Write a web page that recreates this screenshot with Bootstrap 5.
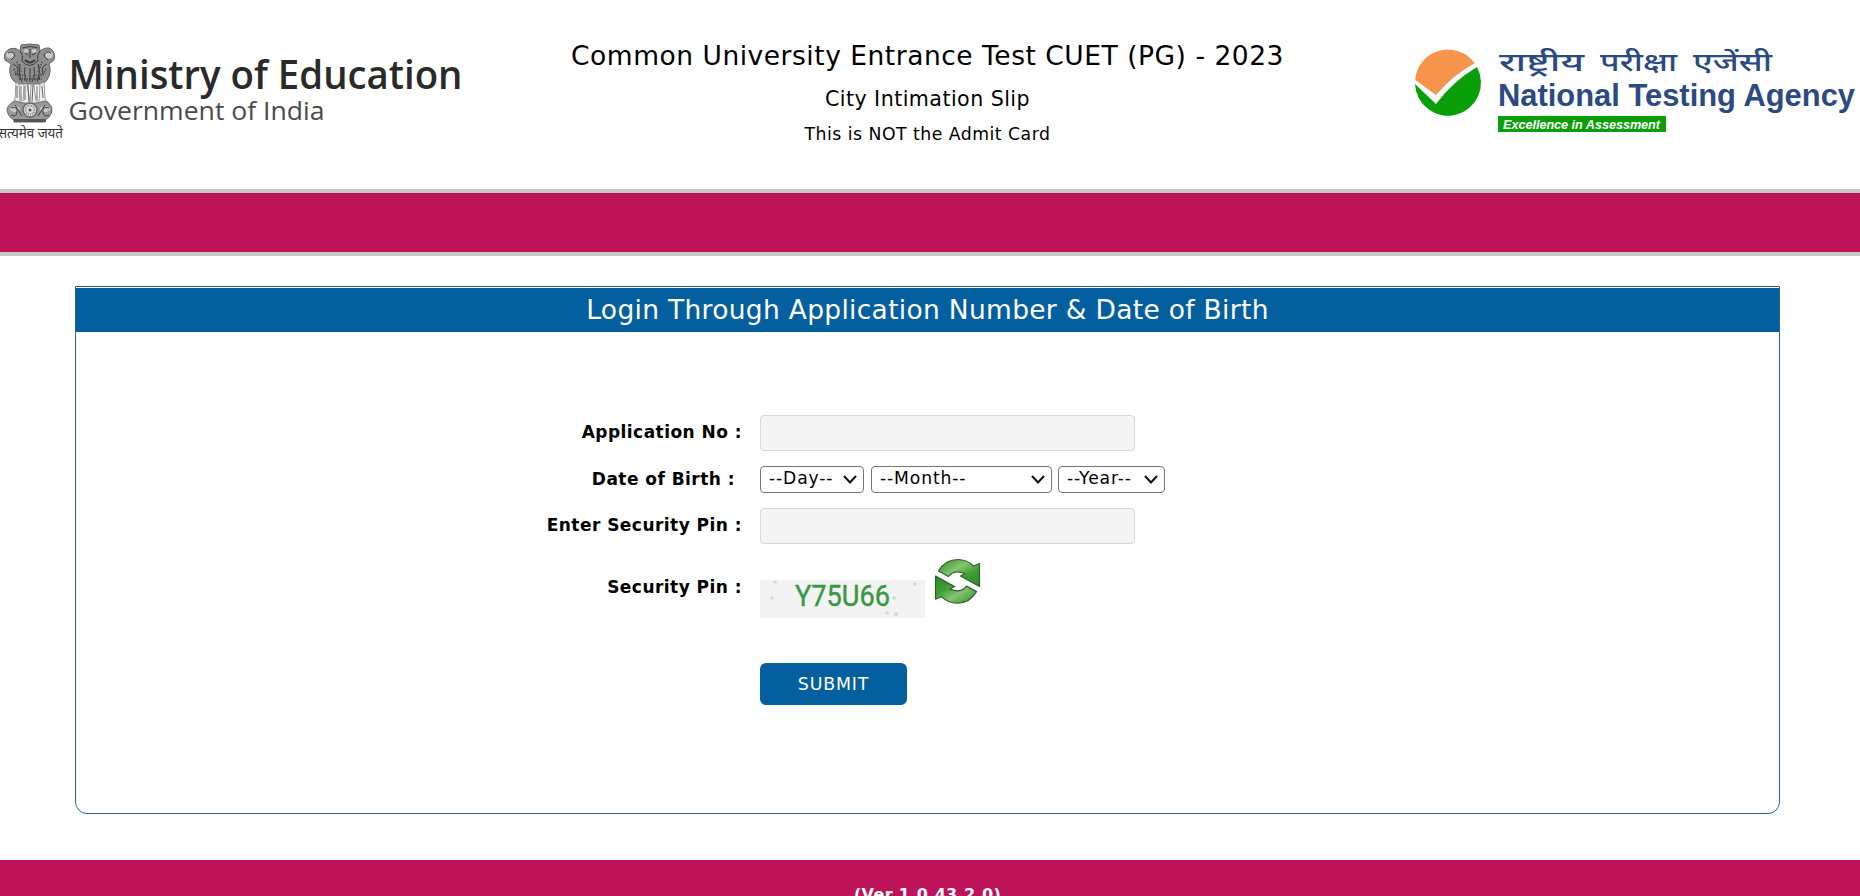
<!DOCTYPE html>
<html lang="en">
<head>
    <meta charset="UTF-8">
    <meta name="viewport" content="width=device-width, initial-scale=1.0">
    <title>CUET (PG) - 2023</title>
    <link rel="stylesheet" href="https://cdn.jsdelivr.net/npm/bootstrap@5.3.0/dist/css/bootstrap.min.css">
    <style>
        body {
            font-family: Verdana, "DejaVu Sans", sans-serif;
            color: #000;
            background-color: #fff;
            height: 896px;
            overflow: hidden;
        }
        .site-header {
            height: 189px;
        }
        .ministry-logo {
            width: 480px;
            height: 160px;
        }
        .nta-logo {
            width: 480px;
            height: 160px;
        }
        .titles {
            padding-top: 37px;
            padding-right: 5px;
        }
        .exam-name {
            font-size: 26.5px;
            letter-spacing: .52px;
            line-height: 38px;
        }
        .slip-name {
            font-size: 20.6px;
            letter-spacing: .45px;
            line-height: 28px;
            margin-top: 10px;
        }
        .slip-note {
            font-size: 17.3px;
            letter-spacing: .48px;
            line-height: 24px;
            margin-top: 9px;
        }
        .color-band {
            height: 67px;
            background-color: #bd1358;
            border-top: 4px solid #c8c6c8;
            border-bottom: 4px solid #c8c6c8;
        }
        .login-panel {
            width: 1705px;
            height: 528px;
            margin: 30px 0 0 75px;
            padding-top: 1px;
            border: 1px solid #2a6484;
            border-radius: 0 0 12px 12px;
        }
        .login-title {
            height: 44px;
            line-height: 44px;
            font-size: 26.5px;
            letter-spacing: .3px;
            color: #fff;
            background-color: #045f9f;
        }
        .login-form {
            padding-top: 83px;
        }
        .form-line {
            display: grid;
            grid-template-columns: 666px 1fr;
            column-gap: 18px;
            align-items: center;
        }
        .form-line label {
            font-size: 17px;
            font-weight: bold;
            letter-spacing: .46px;
            text-align: right;
            white-space: nowrap;
        }
        .text-box {
            width: 375px;
            height: 36px;
            padding: 0 8px;
            border: 1px solid #d6d6d6;
            border-radius: 4px;
            background-color: #f4f4f4;
        }
        .date-line {
            height: 27px;
            margin: 15px 0;
        }
        .form-line .dob-label {
            padding-right: 7px;
        }
        .date-box {
            height: 27px;
            font-size: 17.2px;
            line-height: 23px;
            letter-spacing: .85px;
            padding: 0 0 2px 8px;
            border: 1px solid #767676;
            border-radius: 4px;
            color: #000;
            appearance: none;
            background: #fff url("data:image/svg+xml,%3csvg xmlns='http://www.w3.org/2000/svg' viewBox='0 0 14 9'%3e%3cpath fill='none' stroke='%23111' stroke-width='2' d='M1 1L7 7.500L13 1'/%3e%3c/svg%3e") no-repeat right 6px center / 14px 9px;
        }
        .day-box {
            width: 104px;
        }
        .month-box {
            width: 181px;
            margin: 0 6px 0 7px;
        }
        .year-box {
            width: 107px;
        }
        .pin-line {
            height: 60px;
            margin-top: 14px;
        }
        .submit-btn {
            width: 147px;
            height: 42px;
            margin: 45px 0 0 684px;
            padding: 0;
            font-size: 17.4px;
            letter-spacing: .8px;
            color: #fff;
            background-color: #045f9f;
            border: 0;
            border-radius: 6px;
        }
        .site-footer {
            margin-top: 46px;
            height: 60px;
            padding: 23px 5px 0 0;
            font-size: 16px;
            letter-spacing: .35px;
            line-height: 24px;
            color: #fff;
            background-color: #bd1358;
        }
    </style>
</head>
<body>
    <div class="site-header d-flex justify-content-between">
        <svg class="ministry-logo flex-shrink-0" viewBox="0 0 480 160">
            <!-- Lion capital -->
            <g stroke="#666" stroke-width="1">
                <path fill="#8f8f8f" d="M21 45Q30 43 39 45L40 51Q47 46 51 49Q56 53 54 60L49 64Q52 72 47 80L43 84H17L12 79Q8 71 11 64L5 60Q3 53 8 50Q14 46 20 51Z"/>
                <path fill="#eee" stroke="#999" d="M16 82L15 99L11 105H50L45 99L44 82L40 84L39 101H36L34 85H31L30 102L27 84H24L23 101H20L19 84Z"/>
                <path fill="#999" d="M15 101Q30 106 45 101Q52 104 52 110Q51 117 45 120V122H14V120Q8 117 7 110Q7 105 15 101Z"/>
            </g>
            <g fill="#c9c9c9">
                <ellipse cx="10" cy="55" rx="4" ry="3.500"/>
                <ellipse cx="49" cy="55" rx="4" ry="3.500"/>
                <ellipse cx="26" cy="51" rx="2.500" ry="2"/>
                <ellipse cx="34" cy="51" rx="2.500" ry="2"/>
                <ellipse cx="15" cy="109" rx="5" ry="3"/>
                <ellipse cx="45" cy="109" rx="5" ry="3"/>
            </g>
            <g fill="none" stroke="#3c3c3c" stroke-width="1">
                <path d="M20 51Q24 55 22 61Q29 70 38 61Q36 55 40 51M25 53L28 55M32 55L36 53M30 49V58M22 48Q30 45 38 48"/>
                <path stroke-width="2" d="M25 60Q30 65 35 60"/>
                <path d="M8 53Q13 50 15 56L11 60M51 53Q46 50 44 56L48 60M13 64Q20 67 17 74M47 64Q40 67 43 74M20 64Q18 75 22 82M38 64Q41 74 37 82M25 67Q23 75 27 82M34 67Q36 75 32 82M30 68V82"/>
                <path stroke="#666" d="M17 86V98M21 86V100M25 86V100M28 85L29 102M33 85L32 102M37 86V100M42 86L43 98"/>
                <path d="M15 105L22 116M45 105L38 116M11 108Q18 106 17 112T11 115M49 108Q42 106 43 112T49 115"/>
            </g>
            <g stroke="#444" stroke-width="2" stroke-dasharray="1 1.5" fill="none">
                <path d="M14 69Q18 78 25 80M46 69Q42 77 34 80M17 62L21 72M42 62L38 72M15 74L27 76M33 76L45 74M19 79H42"/>
            </g>
            <circle cx="30" cy="110" r="7" fill="#ddd" stroke="#666" stroke-width="1.4"/>
            <circle cx="30" cy="110" r="4.5" fill="none" stroke="#888" stroke-width="2" stroke-dasharray="1 1"/>
            <circle cx="30" cy="110" r="1.5" fill="#555"/>
            <path d="M14 120.500H46" stroke="#555" stroke-width="3"/>
            <text x="-2" y="137.500" font-family="'Noto Sans', 'Noto Sans Devanagari', sans-serif" font-size="14" fill="#333" textLength="65" lengthAdjust="spacingAndGlyphs">सत्यमेव जयते</text>
            <text x="68.500" y="88.500" font-family="'Open Sans', sans-serif" font-size="39" font-weight="600" fill="#2a2a2a" textLength="394" lengthAdjust="spacingAndGlyphs">Ministry of Education</text>
            <text x="68.500" y="120" font-family="'Open Sans', sans-serif" font-size="26" fill="#4a4a4a" textLength="256" lengthAdjust="spacingAndGlyphs">Government of India</text>
        </svg>

        <div class="titles text-center">
            <div class="exam-name text-nowrap">Common University Entrance Test CUET (PG) - 2023</div>
            <div class="slip-name">City Intimation Slip</div>
            <div class="slip-note">This is NOT the Admit Card</div>
        </div>

        <svg class="nta-logo flex-shrink-0" viewBox="1380 0 480 160">
            <path fill="#f5944a" d="M1415.100 79.800A33 33 0 0 1 1474.700 63.300Q1453 75 1436 95Z"/>
            <path fill="#0a9f08" d="M1415 84L1436 104Q1453 81 1477 67A33 33 0 1 1 1415 84Z"/>
            <g font-family="'Noto Sans', 'Noto Sans Devanagari', sans-serif" font-size="26" font-weight="500" fill="#2b4a82">
                <text x="1499" y="70.500" textLength="85" lengthAdjust="spacingAndGlyphs">राष्ट्रीय</text>
                <text x="1600" y="70.500" textLength="77" lengthAdjust="spacingAndGlyphs">परीक्षा</text>
                <text x="1693" y="70.500" textLength="79" lengthAdjust="spacingAndGlyphs">एजेंसी</text>
            </g>
            <text x="1498" y="106" font-family="'Liberation Sans', Arial, sans-serif" font-size="31" font-weight="bold" fill="#2b4a82" textLength="357" lengthAdjust="spacingAndGlyphs">National Testing Agency</text>
            <rect x="1498" y="116" width="168" height="16" fill="#0a9f08"/>
            <text x="1503" y="128.500" font-family="'Liberation Sans', Arial, sans-serif" font-size="13" font-weight="bold" font-style="italic" fill="#fff" textLength="157" lengthAdjust="spacingAndGlyphs">Excellence in Assessment</text>
        </svg>
    </div>

    <div class="color-band"></div>

    <div class="login-panel">
        <div class="login-title text-center">Login Through Application Number &amp; Date of Birth</div>
        <form class="login-form" id="login-form">
            <div class="form-line">
                <label for="applicationNo">Application No :</label>
                <input type="text" class="text-box" id="applicationNo">
            </div>
            <div class="form-line date-line">
                <label for="day" class="dob-label">Date of Birth :</label>
                <div class="d-flex">
                    <select class="date-box day-box" id="day"><option>--Day--</option></select>
                    <select class="date-box month-box" id="month"><option>--Month--</option></select>
                    <select class="date-box year-box" id="year"><option>--Year--</option></select>
                </div>
            </div>
            <div class="form-line">
                <label for="securityPin">Enter Security Pin :</label>
                <input type="text" class="text-box" id="securityPin">
            </div>
            <div class="form-line pin-line">
                <label>Security Pin :</label>
                <svg width="222" height="60" viewBox="760 558 222 60">
                    <defs>
                        <linearGradient id="arrowGreen" x1="0" y1="0" x2="1" y2="1">
                            <stop offset="0" stop-color="#2f8a28"/>
                            <stop offset=".4" stop-color="#86c472"/>
                            <stop offset=".65" stop-color="#3f9d35"/>
                            <stop offset="1" stop-color="#2c8b25"/>
                        </linearGradient>
                    </defs>
                    <rect x="760" y="580" width="165" height="38" fill="#f3f3f3"/>
                    <g fill="#cfdccd">
                        <circle cx="775" cy="582" r="1.800"/>
                        <circle cx="772" cy="598" r="1.800"/>
                        <circle cx="915" cy="584" r="1.800"/>
                        <circle cx="894" cy="598" r="2"/>
                        <circle cx="887" cy="613" r="1.800"/>
                        <circle cx="896" cy="614" r="2"/>
                    </g>
                    <text x="795" y="606" font-family="Roboto, sans-serif" font-size="29" fill="#399743" stroke="#399743" stroke-width=".4" textLength="95" lengthAdjust="spacingAndGlyphs">Y75U66</text>
                    <!-- Refresh arrows -->
                    <g fill="url(#arrowGreen)" stroke="#2c6427" stroke-width="1.200" stroke-linejoin="round">
                        <path id="arrow" d="M938.500 571Q945 559.500 958 559.500Q967 559.500 973.500 566L979.500 563.500V586.500L960.500 576L965 573.500Q954 569 948.500 576.500Z"/>
                        <use href="#arrow" transform="rotate(180 957.500 581.300)"/>
                    </g>
                </svg>
            </div>
            <button type="submit" class="btn submit-btn">SUBMIT</button>
        </form>
    </div>

    <div class="site-footer text-center fw-bold">(Ver 1.0.43.2.0)</div>

    <script src="https://cdn.jsdelivr.net/npm/bootstrap@5.3.0/dist/js/bootstrap.bundle.min.js"></script>
    <script>
        function addOptions(id, values) {
            let box = document.getElementById(id);
            values.forEach(function(value) {
                box.add(new Option(value, value));
            });
        }

        addOptions("day", Array.from({ length: 31 }, (_, i) => i + 1));
        addOptions("month", ["January", "February", "March", "April", "May", "June", "July", "August", "September", "October", "November", "December"]);
        addOptions("year", Array.from({ length: 60 }, (_, i) => 2010 - i));

        document.getElementById("login-form").addEventListener("submit", function(event) {
            event.preventDefault();
        });
    </script>
</body>
</html>
